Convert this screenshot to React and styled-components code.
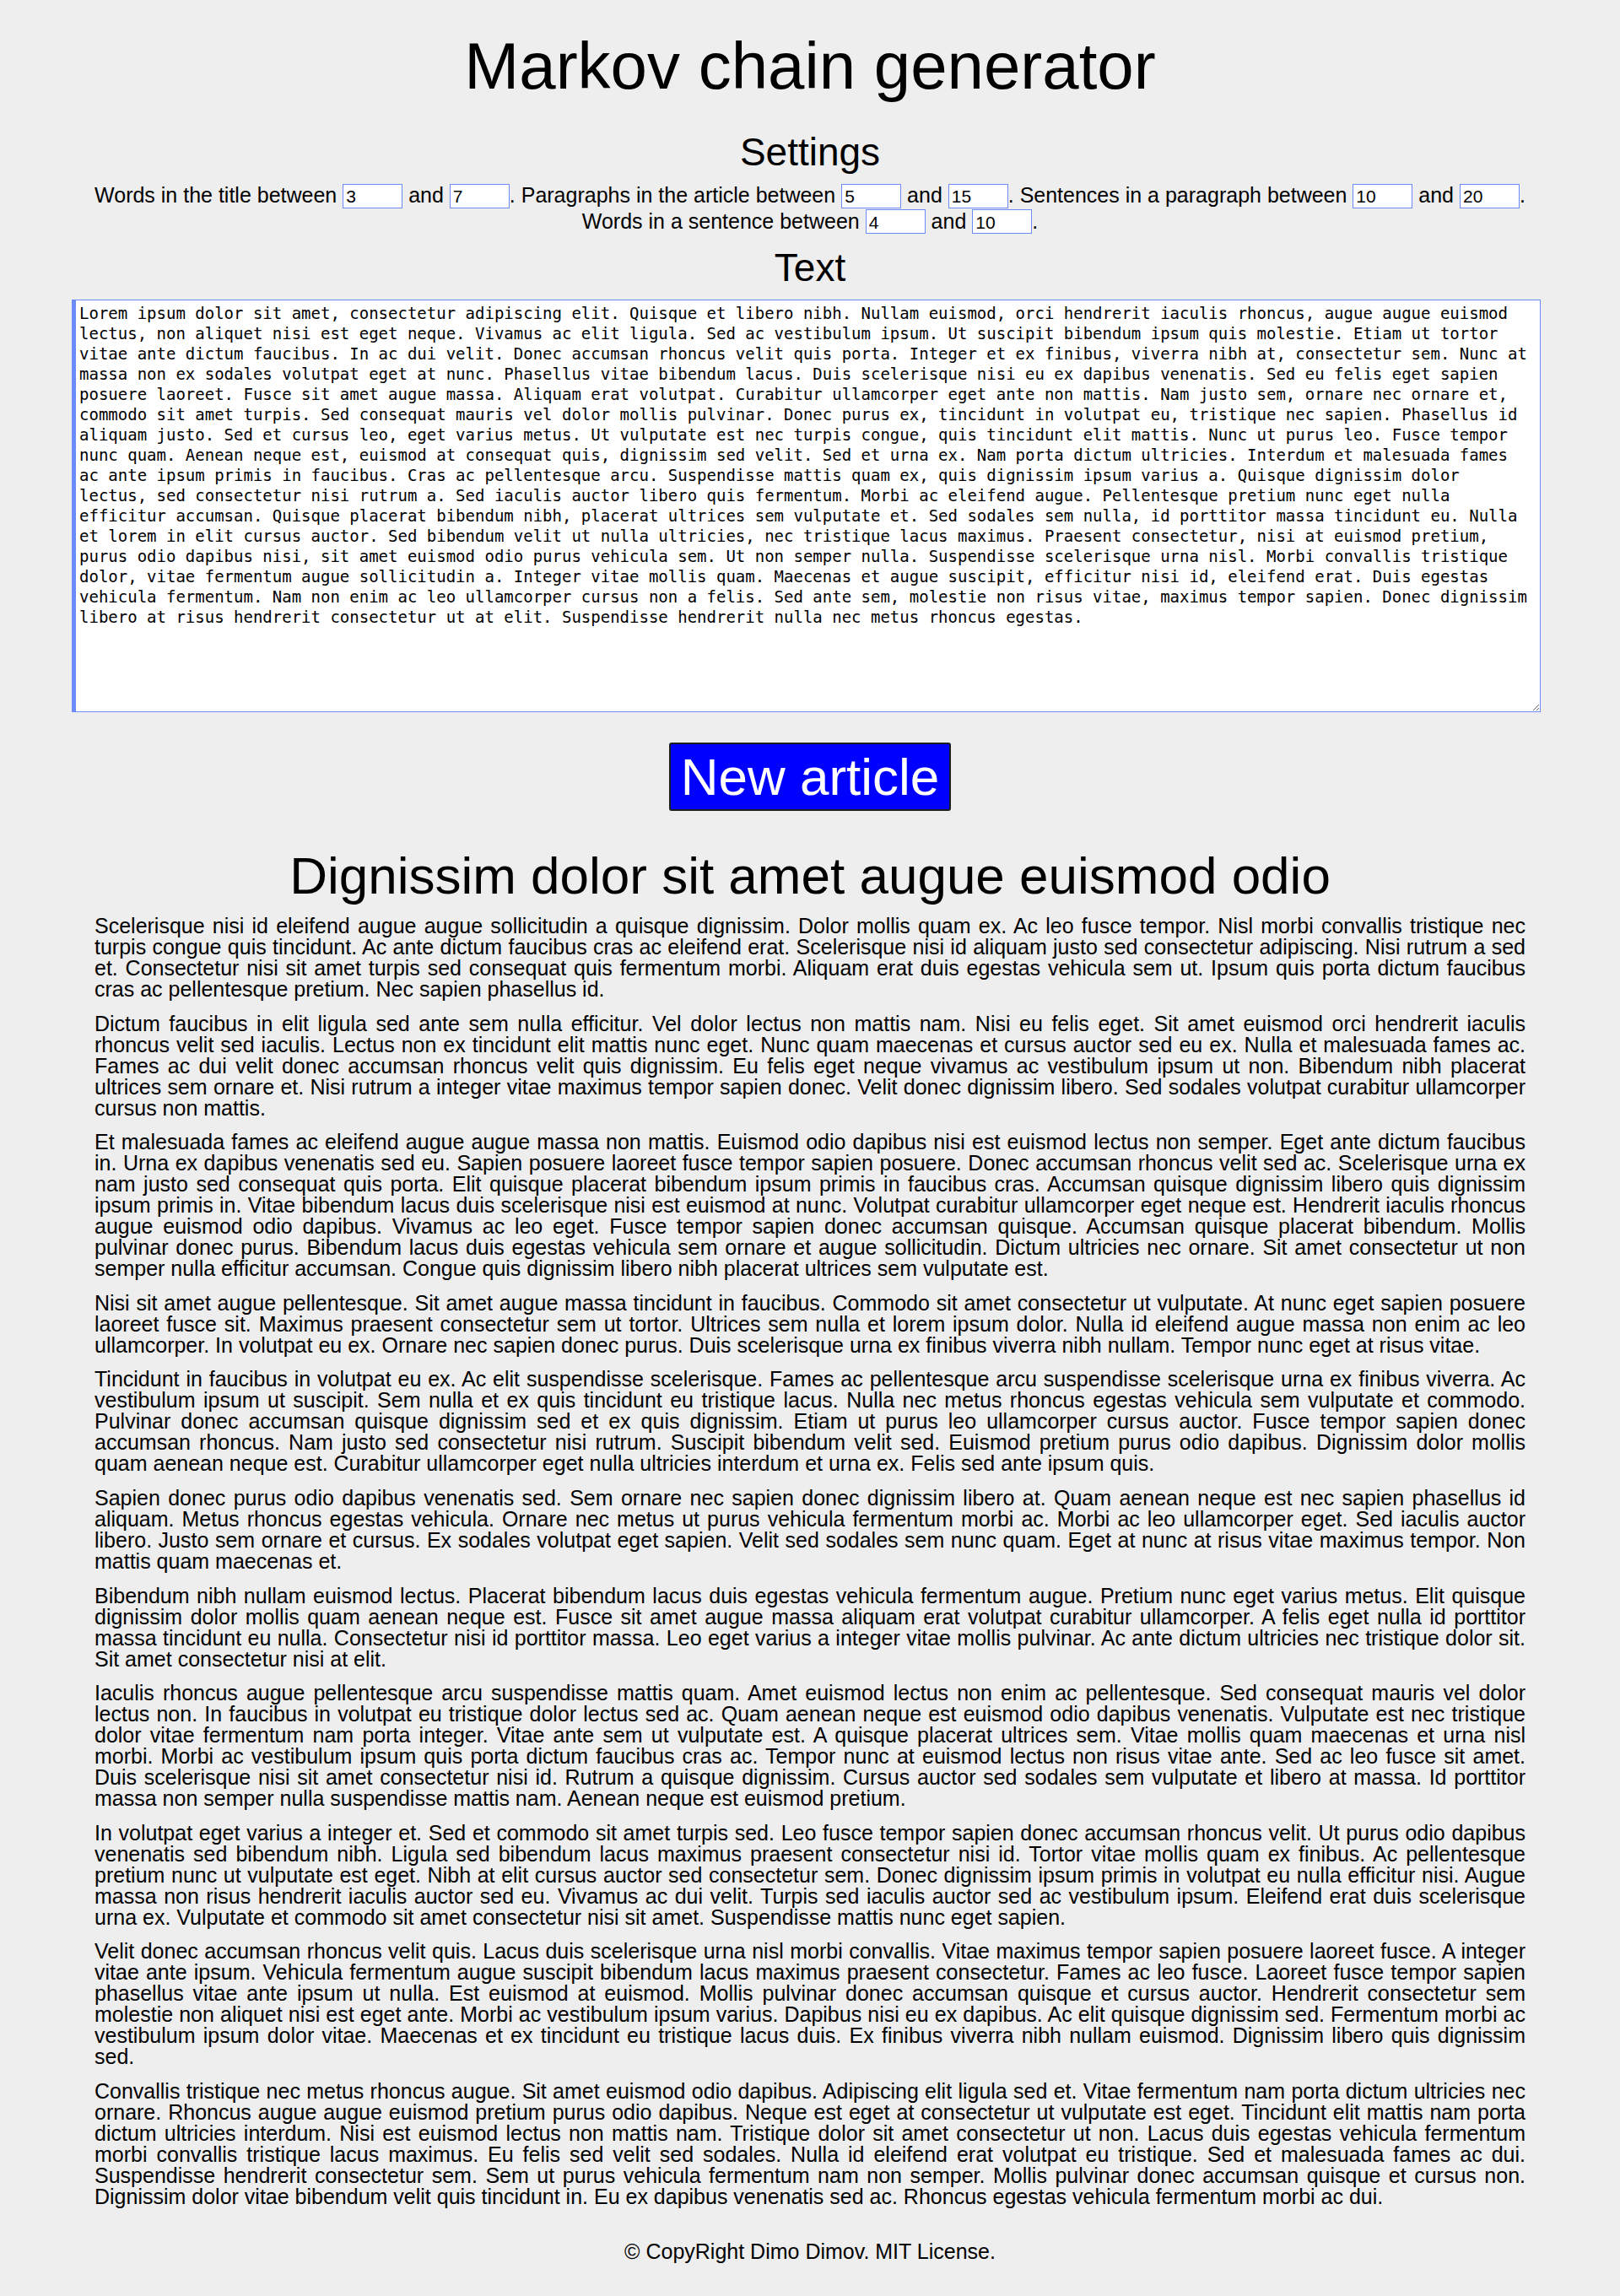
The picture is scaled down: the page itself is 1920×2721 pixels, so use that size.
import React from 'react'
import styled, { createGlobalStyle } from 'styled-components'

const SOURCE_TEXT =
  'Lorem ipsum dolor sit amet, consectetur adipiscing elit. Quisque et libero nibh. Nullam euismod, orci hendrerit iaculis rhoncus, augue augue euismod lectus, non aliquet nisi est eget neque. Vivamus ac elit ligula. Sed ac vestibulum ipsum. Ut suscipit bibendum ipsum quis molestie. Etiam ut tortor vitae ante dictum faucibus. In ac dui velit. Donec accumsan rhoncus velit quis porta. Integer et ex finibus, viverra nibh at, consectetur sem. Nunc at massa non ex sodales volutpat eget at nunc. Phasellus vitae bibendum lacus. Duis scelerisque nisi eu ex dapibus venenatis. Sed eu felis eget sapien posuere laoreet. Fusce sit amet augue massa. Aliquam erat volutpat. Curabitur ullamcorper eget ante non mattis. Nam justo sem, ornare nec ornare et, commodo sit amet turpis. Sed consequat mauris vel dolor mollis pulvinar. Donec purus ex, tincidunt in volutpat eu, tristique nec sapien. Phasellus id aliquam justo. Sed et cursus leo, eget varius metus. Ut vulputate est nec turpis congue, quis tincidunt elit mattis. Nunc ut purus leo. Fusce tempor nunc quam. Aenean neque est, euismod at consequat quis, dignissim sed velit. Sed et urna ex. Nam porta dictum ultricies. Interdum et malesuada fames ac ante ipsum primis in faucibus. Cras ac pellentesque arcu. Suspendisse mattis quam ex, quis dignissim ipsum varius a. Quisque dignissim dolor lectus, sed consectetur nisi rutrum a. Sed iaculis auctor libero quis fermentum. Morbi ac eleifend augue. Pellentesque pretium nunc eget nulla efficitur accumsan. Quisque placerat bibendum nibh, placerat ultrices sem vulputate et. Sed sodales sem nulla, id porttitor massa tincidunt eu. Nulla et lorem in elit cursus auctor. Sed bibendum velit ut nulla ultricies, nec tristique lacus maximus. Praesent consectetur, nisi at euismod pretium, purus odio dapibus nisi, sit amet euismod odio purus vehicula sem. Ut non semper nulla. Suspendisse scelerisque urna nisl. Morbi convallis tristique dolor, vitae fermentum augue sollicitudin a. Integer vitae mollis quam. Maecenas et augue suscipit, efficitur nisi id, eleifend erat. Duis egestas vehicula fermentum. Nam non enim ac leo ullamcorper cursus non a felis. Sed ante sem, molestie non risus vitae, maximus tempor sapien. Donec dignissim libero at risus hendrerit consectetur ut at elit. Suspendisse hendrerit nulla nec metus rhoncus egestas.'

const ARTICLE = {
  title: 'Dignissim dolor sit amet augue euismod odio',
  paragraphs: [
    'Scelerisque nisi id eleifend augue augue sollicitudin a quisque dignissim. Dolor mollis quam ex. Ac leo fusce tempor. Nisl morbi convallis tristique nec turpis congue quis tincidunt. Ac ante dictum faucibus cras ac eleifend erat. Scelerisque nisi id aliquam justo sed consectetur adipiscing. Nisi rutrum a sed et. Consectetur nisi sit amet turpis sed consequat quis fermentum morbi. Aliquam erat duis egestas vehicula sem ut. Ipsum quis porta dictum faucibus cras ac pellentesque pretium. Nec sapien phasellus id.',
    'Dictum faucibus in elit ligula sed ante sem nulla efficitur. Vel dolor lectus non mattis nam. Nisi eu felis eget. Sit amet euismod orci hendrerit iaculis rhoncus velit sed iaculis. Lectus non ex tincidunt elit mattis nunc eget. Nunc quam maecenas et cursus auctor sed eu ex. Nulla et malesuada fames ac. Fames ac dui velit donec accumsan rhoncus velit quis dignissim. Eu felis eget neque vivamus ac vestibulum ipsum ut non. Bibendum nibh placerat ultrices sem ornare et. Nisi rutrum a integer vitae maximus tempor sapien donec. Velit donec dignissim libero. Sed sodales volutpat curabitur ullamcorper cursus non mattis.',
    'Et malesuada fames ac eleifend augue augue massa non mattis. Euismod odio dapibus nisi est euismod lectus non semper. Eget ante dictum faucibus in. Urna ex dapibus venenatis sed eu. Sapien posuere laoreet fusce tempor sapien posuere. Donec accumsan rhoncus velit sed ac. Scelerisque urna ex nam justo sed consequat quis porta. Elit quisque placerat bibendum ipsum primis in faucibus cras. Accumsan quisque dignissim libero quis dignissim ipsum primis in. Vitae bibendum lacus duis scelerisque nisi est euismod at nunc. Volutpat curabitur ullamcorper eget neque est. Hendrerit iaculis rhoncus augue euismod odio dapibus. Vivamus ac leo eget. Fusce tempor sapien donec accumsan quisque. Accumsan quisque placerat bibendum. Mollis pulvinar donec purus. Bibendum lacus duis egestas vehicula sem ornare et augue sollicitudin. Dictum ultricies nec ornare. Sit amet consectetur ut non semper nulla efficitur accumsan. Congue quis dignissim libero nibh placerat ultrices sem vulputate est.',
    'Nisi sit amet augue pellentesque. Sit amet augue massa tincidunt in faucibus. Commodo sit amet consectetur ut vulputate. At nunc eget sapien posuere laoreet fusce sit. Maximus praesent consectetur sem ut tortor. Ultrices sem nulla et lorem ipsum dolor. Nulla id eleifend augue massa non enim ac leo ullamcorper. In volutpat eu ex. Ornare nec sapien donec purus. Duis scelerisque urna ex finibus viverra nibh nullam. Tempor nunc eget at risus vitae.',
    'Tincidunt in faucibus in volutpat eu ex. Ac elit suspendisse scelerisque. Fames ac pellentesque arcu suspendisse scelerisque urna ex finibus viverra. Ac vestibulum ipsum ut suscipit. Sem nulla et ex quis tincidunt eu tristique lacus. Nulla nec metus rhoncus egestas vehicula sem vulputate et commodo. Pulvinar donec accumsan quisque dignissim sed et ex quis dignissim. Etiam ut purus leo ullamcorper cursus auctor. Fusce tempor sapien donec accumsan rhoncus. Nam justo sed consectetur nisi rutrum. Suscipit bibendum velit sed. Euismod pretium purus odio dapibus. Dignissim dolor mollis quam aenean neque est. Curabitur ullamcorper eget nulla ultricies interdum et urna ex. Felis sed ante ipsum quis.',
    'Sapien donec purus odio dapibus venenatis sed. Sem ornare nec sapien donec dignissim libero at. Quam aenean neque est nec sapien phasellus id aliquam. Metus rhoncus egestas vehicula. Ornare nec metus ut purus vehicula fermentum morbi ac. Morbi ac leo ullamcorper eget. Sed iaculis auctor libero. Justo sem ornare et cursus. Ex sodales volutpat eget sapien. Velit sed sodales sem nunc quam. Eget at nunc at risus vitae maximus tempor. Non mattis quam maecenas et.',
    'Bibendum nibh nullam euismod lectus. Placerat bibendum lacus duis egestas vehicula fermentum augue. Pretium nunc eget varius metus. Elit quisque dignissim dolor mollis quam aenean neque est. Fusce sit amet augue massa aliquam erat volutpat curabitur ullamcorper. A felis eget nulla id porttitor massa tincidunt eu nulla. Consectetur nisi id porttitor massa. Leo eget varius a integer vitae mollis pulvinar. Ac ante dictum ultricies nec tristique dolor sit. Sit amet consectetur nisi at elit.',
    'Iaculis rhoncus augue pellentesque arcu suspendisse mattis quam. Amet euismod lectus non enim ac pellentesque. Sed consequat mauris vel dolor lectus non. In faucibus in volutpat eu tristique dolor lectus sed ac. Quam aenean neque est euismod odio dapibus venenatis. Vulputate est nec tristique dolor vitae fermentum nam porta integer. Vitae ante sem ut vulputate est. A quisque placerat ultrices sem. Vitae mollis quam maecenas et urna nisl morbi. Morbi ac vestibulum ipsum quis porta dictum faucibus cras ac. Tempor nunc at euismod lectus non risus vitae ante. Sed ac leo fusce sit amet. Duis scelerisque nisi sit amet consectetur nisi id. Rutrum a quisque dignissim. Cursus auctor sed sodales sem vulputate et libero at massa. Id porttitor massa non semper nulla suspendisse mattis nam. Aenean neque est euismod pretium.',
    'In volutpat eget varius a integer et. Sed et commodo sit amet turpis sed. Leo fusce tempor sapien donec accumsan rhoncus velit. Ut purus odio dapibus venenatis sed bibendum nibh. Ligula sed bibendum lacus maximus praesent consectetur nisi id. Tortor vitae mollis quam ex finibus. Ac pellentesque pretium nunc ut vulputate est eget. Nibh at elit cursus auctor sed consectetur sem. Donec dignissim ipsum primis in volutpat eu nulla efficitur nisi. Augue massa non risus hendrerit iaculis auctor sed eu. Vivamus ac dui velit. Turpis sed iaculis auctor sed ac vestibulum ipsum. Eleifend erat duis scelerisque urna ex. Vulputate et commodo sit amet consectetur nisi sit amet. Suspendisse mattis nunc eget sapien.',
    'Velit donec accumsan rhoncus velit quis. Lacus duis scelerisque urna nisl morbi convallis. Vitae maximus tempor sapien posuere laoreet fusce. A integer vitae ante ipsum. Vehicula fermentum augue suscipit bibendum lacus maximus praesent consectetur. Fames ac leo fusce. Laoreet fusce tempor sapien phasellus vitae ante ipsum ut nulla. Est euismod at euismod. Mollis pulvinar donec accumsan quisque et cursus auctor. Hendrerit consectetur sem molestie non aliquet nisi est eget ante. Morbi ac vestibulum ipsum varius. Dapibus nisi eu ex dapibus. Ac elit quisque dignissim sed. Fermentum morbi ac vestibulum ipsum dolor vitae. Maecenas et ex tincidunt eu tristique lacus duis. Ex finibus viverra nibh nullam euismod. Dignissim libero quis dignissim sed.',
    'Convallis tristique nec metus rhoncus augue. Sit amet euismod odio dapibus. Adipiscing elit ligula sed et. Vitae fermentum nam porta dictum ultricies nec ornare. Rhoncus augue augue euismod pretium purus odio dapibus. Neque est eget at consectetur ut vulputate est eget. Tincidunt elit mattis nam porta dictum ultricies interdum. Nisi est euismod lectus non mattis nam. Tristique dolor sit amet consectetur ut non. Lacus duis egestas vehicula fermentum morbi convallis tristique lacus maximus. Eu felis sed velit sed sodales. Nulla id eleifend erat volutpat eu tristique. Sed et malesuada fames ac dui. Suspendisse hendrerit consectetur sem. Sem ut purus vehicula fermentum nam non semper. Mollis pulvinar donec accumsan quisque et cursus non. Dignissim dolor vitae bibendum velit quis tincidunt in. Eu ex dapibus venenatis sed ac. Rhoncus egestas vehicula fermentum morbi ac dui.',
  ],
}

const GlobalStyle = createGlobalStyle`
  html, body {
    margin: 0;
    padding: 0;
    background: #eeeeee;
  }
  body {
    font-family: "Liberation Sans", Arial, sans-serif;
    color: #000;
  }
`

export default function App() {
  return (
    <>
      <GlobalStyle />
      <Page>
        <Title>Markov chain generator</Title>

        <SectionTitle>Settings</SectionTitle>
        <SettingsLine>
          Words in the title between <NumberInput defaultValue="3" /> and <NumberInput defaultValue="7" />.
          Paragraphs in the article between <NumberInput defaultValue="5" /> and <NumberInput defaultValue="15" />.
          Sentences in a paragraph between <NumberInput defaultValue="10" /> and <NumberInput defaultValue="20" />.
          Words in a sentence between <NumberInput defaultValue="4" /> and <NumberInput defaultValue="10" />.
        </SettingsLine>

        <SectionTitle $gap={13}>Text</SectionTitle>
        <SourceArea defaultValue={SOURCE_TEXT} spellCheck={false} />

        <ButtonRow>
          <GenerateButton type="button">New article</GenerateButton>
        </ButtonRow>

        <Article>
          <ArticleTitle>{ARTICLE.title}</ArticleTitle>
          {ARTICLE.paragraphs.map((text, i) => (
            <Paragraph key={i}>{text}</Paragraph>
          ))}
        </Article>

        <Footer>© CopyRight Dimo Dimov. MIT License.</Footer>
      </Page>
    </>
  )
}

const Page = styled.div`
  width: 1750px;
  margin: 0 auto;
  padding: 33px 0 40px;
`

const Title = styled.h1`
  margin: 0;
  font-size: 78px;
  font-weight: normal;
  text-align: center;
`

const SectionTitle = styled.h2`
  margin: ${p => (p.$gap ? p.$gap : 29)}px 0 0;
  font-size: 46px;
  font-weight: normal;
  text-align: center;
`

const SettingsLine = styled.p`
  margin: 9px 0 0;
  font-size: 25px;
  line-height: 30px;
  text-align: center;
`

const NumberInput = styled.input.attrs({ type: 'text' })`
  box-sizing: border-box;
  width: 71px;
  height: 29px;
  padding: 2px 3px 0;
  border: 1px solid #6b8cf8;
  border-radius: 0;
  background: #fff;
  font-family: "Liberation Sans", Arial, sans-serif;
  font-size: 21px;
  color: #000;
  outline: none;
`

const SourceArea = styled.textarea`
  display: block;
  box-sizing: border-box;
  width: 1741px;
  height: 489px;
  margin: 11px 0 0;
  padding: 3px 10px 2px 4px;
  border: 1px solid #6b8cf8;
  border-left-width: 5px;
  border-radius: 0;
  background: #fff;
  color: #000;
  font-family: "DejaVu Sans Mono", monospace;
  font-size: 19px;
  line-height: 24px;
  outline: none;
`

const ButtonRow = styled.div`
  display: flex;
  justify-content: center;
  margin-top: 36px;
`

const GenerateButton = styled.button`
  box-sizing: border-box;
  height: 81px;
  padding: 3px 12px;
  border: 2px solid #1c1c1c;
  border-radius: 3px;
  background: #0000ff;
  color: #fff;
  font-family: "Liberation Sans", Arial, sans-serif;
  font-size: 62px;
  line-height: normal;
  cursor: pointer;
`

const Article = styled.article`
  padding: 0 27px;
`

const ArticleTitle = styled.h2`
  margin: 41px 0 0;
  font-size: 62px;
  font-weight: normal;
  text-align: center;
`

const Paragraph = styled.p`
  margin: 15.6px 0 0;
  font-size: 25px;
  line-height: 25px;
  text-align: justify;

  &:first-of-type {
    margin-top: 12px;
  }
`

const Footer = styled.footer`
  margin-top: 38px;
  font-size: 25px;
  text-align: center;
`
